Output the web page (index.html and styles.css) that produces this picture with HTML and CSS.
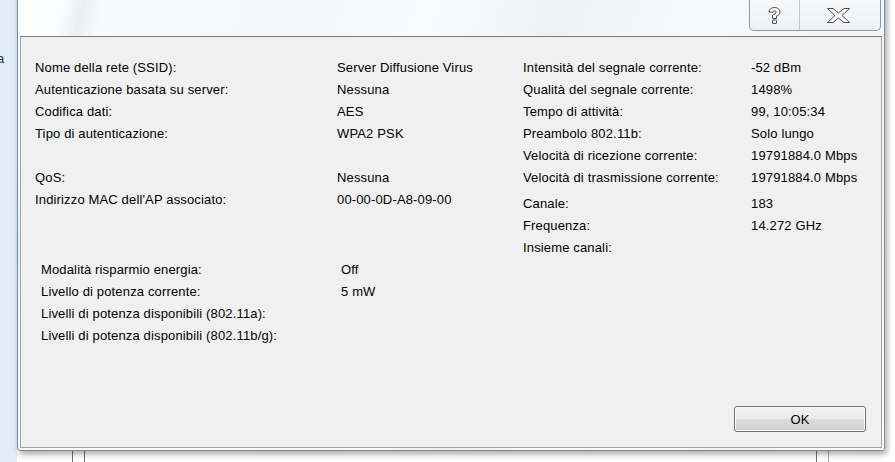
FILE: index.html
```html
<!DOCTYPE html>
<html lang="it">
<head>
    <meta charset="UTF-8">
    <link rel="stylesheet" href="styles.css">
    <title>Proprietà connessione wireless</title>
</head>
<body>
    <div class="desktop">
        <!-- pieces of the window behind -->
        <div class="side-strip"><span class="side-text">a</span></div>
        <div class="back-line" style="left: 72px"></div>
        <div class="back-line" style="left: 84px"></div>
        <div class="back-line" style="left: 816px"></div>
        <div class="back-line light" style="left: 828px"></div>

        <div class="window">
            <div class="caption">
                <div class="caption-btns">
                    <div class="cap-btn help">
                        <svg width="13" height="17" viewBox="0 0 13 17">
                            <path d="M1 5 C1 2.2 3.3 0.5 6.5 0.5 C9.8 0.5 12 2.3 12 5 C12 7.3 10.3 8.4 8.5 9 L8.5 11.5 L4.5 11.5 L4.5 8 C6.3 7.4 8 6.9 8 5.2 C8 4.3 7.4 3.7 6.5 3.7 C5.5 3.7 5 4.4 5 5.3 Z" fill="#fbfbfb" stroke="#4e4e4e" stroke-width="1" stroke-linejoin="round"/>
                            <rect x="4.5" y="13" width="4" height="3.5" rx="0.5" fill="#fbfbfb" stroke="#4e4e4e" stroke-width="1"/>
                        </svg>
                    </div>
                    <div class="cap-btn close">
                        <svg width="23" height="15" viewBox="0 0 23 15">
                            <polygon points="0.5,0.5 6,0.5 11.5,5 17,0.5 22.5,0.5 15,7.5 22.5,14.5 17,14.5 11.5,10 6,14.5 0.5,14.5 8,7.5" fill="#fbfbfb" stroke="#4e4e4e" stroke-width="1" stroke-linejoin="round"/>
                        </svg>
                    </div>
                </div>
            </div>

            <div class="client">
                <div class="top-info">
                    <div class="info-grid left">
                        <span>Nome della rete (SSID):</span><span>Server Diffusione Virus</span>
                        <span>Autenticazione basata su server:</span><span>Nessuna</span>
                        <span>Codifica dati:</span><span>AES</span>
                        <span>Tipo di autenticazione:</span><span>WPA2 PSK</span>
                        <span></span><span></span>
                        <span>QoS:</span><span>Nessuna</span>
                        <span>Indirizzo MAC dell'AP associato:</span><span>00-00-0D-A8-09-00</span>
                    </div>
                    <div class="right-info">
                        <div class="info-grid right">
                            <span>Intensità del segnale corrente:</span><span>-52 dBm</span>
                            <span>Qualità del segnale corrente:</span><span>1498%</span>
                            <span>Tempo di attività:</span><span>99, 10:05:34</span>
                            <span>Preambolo 802.11b:</span><span>Solo lungo</span>
                            <span>Velocità di ricezione corrente:</span><span>19791884.0 Mbps</span>
                            <span>Velocità di trasmissione corrente:</span><span>19791884.0 Mbps</span>
                        </div>
                        <div class="info-grid right channels">
                            <span>Canale:</span><span>183</span>
                            <span>Frequenza:</span><span>14.272 GHz</span>
                            <span>Insieme canali:</span><span></span>
                        </div>
                    </div>
                </div>

                <div class="info-grid power">
                    <span>Modalità risparmio energia:</span><span>Off</span>
                    <span>Livello di potenza corrente:</span><span>5 mW</span>
                    <span>Livelli di potenza disponibili (802.11a):</span><span></span>
                    <span>Livelli di potenza disponibili (802.11b/g):</span><span></span>
                </div>

                <button class="ok-btn">OK</button>
            </div>
        </div>
    </div>
</body>
</html>
```

FILE: styles.css
```css
body {
    margin: 0;
    background: #ffffff;
    font-family: 'Liberation Sans', Arial, sans-serif;
    font-size: 13px;
    color: #000;
}
.desktop {
    position: relative;
    width: 895px;
    height: 462px;
    overflow: hidden;
    background: #ffffff;
}
.side-strip {
    position: absolute;
    left: 0;
    top: 0;
    width: 17px;
    height: 100%;
    background: #e2ecf8;
    overflow: hidden;
}
.side-text {
    display: block;
    margin: 51px 0 0 -3px;
    color: #1b2f7a;
}
.back-line {
    position: absolute;
    top: 448px;
    width: 1px;
    height: 14px;
    background: #6e6e6e;
}
.back-line.light {
    background: #a8a8a8;
}
.window {
    position: absolute;
    left: 17px;
    top: -10px;
    width: 862px;
    padding: 0 2px 2px 2px;
    border: 1px solid #7f8a96;
    border-radius: 0 0 3px 3px;
    background: linear-gradient(105deg, #fbfcfd 0%, #fbfcfd 5%, #e9eef4 7%, #f9fafc 9%, #f4f6f8 30%, #fafbfc 42%, #eff2f4 55%, #f8f9fa 70%, #f1f4f6 85%, #f9fafb 100%);
    box-shadow: 2px 3px 6px rgba(0, 0, 0, 0.35);
}
.caption {
    height: 45px;
    display: flex;
    justify-content: flex-end;
    align-items: flex-start;
    padding-right: 1px;
}
.caption-btns {
    display: flex;
    height: 39px;
    border: 1px solid #8d97a3;
    border-top: none;
    border-radius: 0 0 5px 5px;
    background: linear-gradient(#f9fafb, #eef1f4);
    overflow: hidden;
}
.cap-btn {
    display: flex;
    justify-content: center;
    align-items: flex-end;
    padding-bottom: 7px;
    box-sizing: border-box;
}
.cap-btn.help {
    width: 50px;
    border-right: 1px solid #c3c8ce;
    padding-bottom: 6px;
}
.cap-btn.close {
    width: 80px;
    padding-right: 4px;
}
.client {
    display: flex;
    flex-direction: column;
    padding: 19px 15px 15px 14px;
    box-sizing: border-box;
    height: 412px;
    background: #f0f0f0;
    border: 1px solid #a3a3a3;
    border-top-color: #7b7b7b;
}
.top-info {
    display: flex;
}
.info-grid {
    display: grid;
    grid-auto-rows: 22px;
    align-items: center;
    letter-spacing: 0.15px;
    white-space: nowrap;
}
.info-grid.left {
    grid-template-columns: 302px 186px;
    align-content: start;
}
.info-grid.right {
    grid-template-columns: 228px auto;
}
.channels {
    margin-top: 4px;
}
.info-grid.power {
    grid-template-columns: 300px auto;
    padding-left: 6px;
}
.ok-btn {
    margin-top: auto;
    align-self: flex-end;
    width: 132px;
    height: 26px;
    font-family: 'Liberation Sans', Arial, sans-serif;
    font-size: 13px;
    color: #000;
    border: 1px solid #707070;
    border-radius: 3px;
    background: linear-gradient(#f2f2f2 0%, #ebebeb 50%, #dddddd 51%, #cfcfcf 100%);
    box-shadow: inset 0 0 0 1px #fcfcfc;
    padding: 0;
}
```
